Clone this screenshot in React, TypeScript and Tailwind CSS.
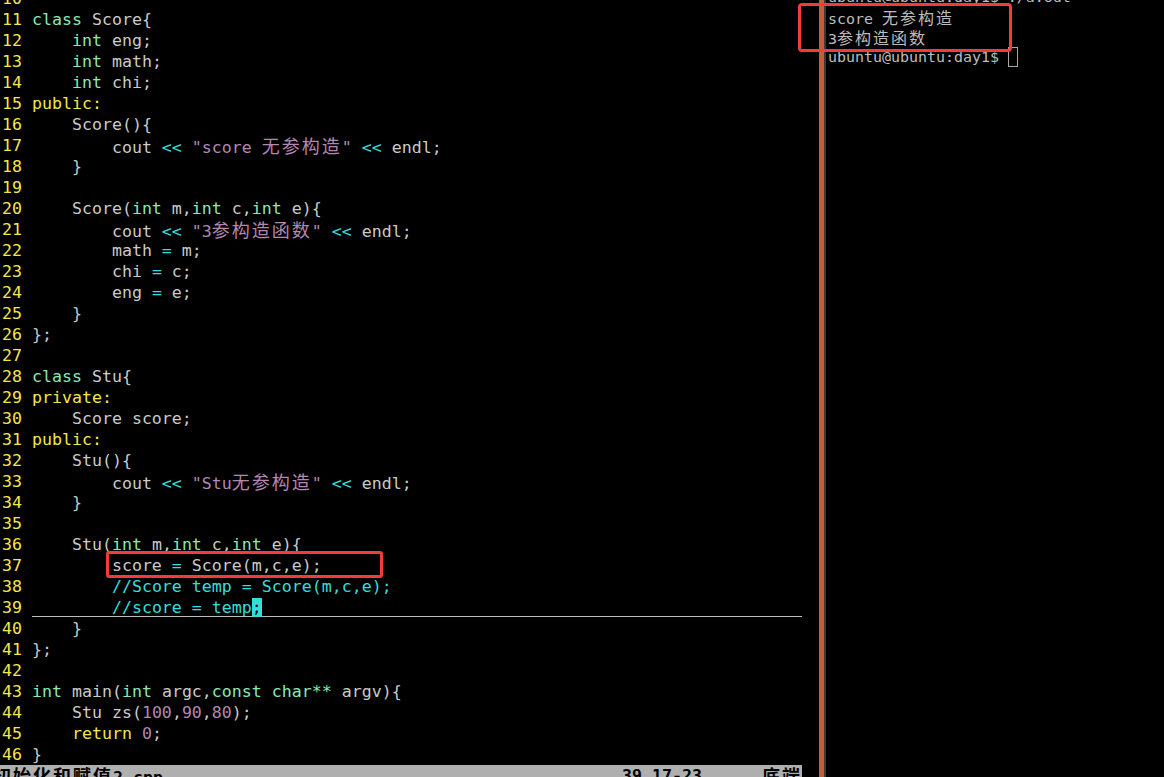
import React from 'react';

// 颜色: n 普通, t 类型, y 关键字, s 字符串/数字, o 运算符/注释
const COLORS: Record<string, string> = {
  n: 'text-[#cacaca]',
  t: 'text-[#8ae8b0]',
  y: 'text-[#f5e64c]',
  s: 'text-[#b487b0]',
  o: 'text-[#34dede]',
  cur: 'bg-[#34dede] text-black',
};

type Tok = [string, string];

const lines: { no: number; toks: Tok[]; cursorLine?: boolean }[] = [
  { no: 10, toks: [] },
  { no: 11, toks: [['class', 't'], [' Score{', 'n']] },
  { no: 12, toks: [['    ', 'n'], ['int', 't'], [' eng;', 'n']] },
  { no: 13, toks: [['    ', 'n'], ['int', 't'], [' math;', 'n']] },
  { no: 14, toks: [['    ', 'n'], ['int', 't'], [' chi;', 'n']] },
  { no: 15, toks: [['public:', 'y']] },
  { no: 16, toks: [['    Score(){', 'n']] },
  { no: 17, toks: [['        cout ', 'n'], ['<<', 'o'], [' ', 'n'], ['"score 无参构造"', 's'], [' ', 'n'], ['<<', 'o'], [' endl;', 'n']] },
  { no: 18, toks: [['    }', 'n']] },
  { no: 19, toks: [] },
  { no: 20, toks: [['    Score(', 'n'], ['int', 't'], [' m,', 'n'], ['int', 't'], [' c,', 'n'], ['int', 't'], [' e){', 'n']] },
  { no: 21, toks: [['        cout ', 'n'], ['<<', 'o'], [' ', 'n'], ['"3参构造函数"', 's'], [' ', 'n'], ['<<', 'o'], [' endl;', 'n']] },
  { no: 22, toks: [['        math ', 'n'], ['=', 'o'], [' m;', 'n']] },
  { no: 23, toks: [['        chi ', 'n'], ['=', 'o'], [' c;', 'n']] },
  { no: 24, toks: [['        eng ', 'n'], ['=', 'o'], [' e;', 'n']] },
  { no: 25, toks: [['    }', 'n']] },
  { no: 26, toks: [['};', 'n']] },
  { no: 27, toks: [] },
  { no: 28, toks: [['class', 't'], [' Stu{', 'n']] },
  { no: 29, toks: [['private:', 'y']] },
  { no: 30, toks: [['    Score score;', 'n']] },
  { no: 31, toks: [['public:', 'y']] },
  { no: 32, toks: [['    Stu(){', 'n']] },
  { no: 33, toks: [['        cout ', 'n'], ['<<', 'o'], [' ', 'n'], ['"Stu无参构造"', 's'], [' ', 'n'], ['<<', 'o'], [' endl;', 'n']] },
  { no: 34, toks: [['    }', 'n']] },
  { no: 35, toks: [] },
  { no: 36, toks: [['    Stu(', 'n'], ['int', 't'], [' m,', 'n'], ['int', 't'], [' c,', 'n'], ['int', 't'], [' e){', 'n']] },
  { no: 37, toks: [['        score ', 'n'], ['=', 'o'], [' Score(m,c,e);', 'n']] },
  { no: 38, toks: [['        ', 'n'], ['//Score temp = Score(m,c,e);', 'o']] },
  { no: 39, toks: [['        ', 'n'], ['//score = temp', 'o'], [';', 'cur']], cursorLine: true },
  { no: 40, toks: [['    }', 'n']] },
  { no: 41, toks: [['};', 'n']] },
  { no: 42, toks: [] },
  { no: 43, toks: [['int', 't'], [' main(', 'n'], ['int', 't'], [' argc,', 'n'], ['const', 't'], [' ', 'n'], ['char**', 't'], [' argv){', 'n']] },
  { no: 44, toks: [['    Stu zs(', 'n'], ['100', 's'], [',', 'n'], ['90', 's'], [',', 'n'], ['80', 's'], [');', 'n']] },
  { no: 45, toks: [['    ', 'n'], ['return', 'y'], [' ', 'n'], ['0', 's'], [';', 'n']] },
  { no: 46, toks: [['}', 'n']] },
];

// 中文字符占两列
const Txt = ({ text, small }: { text: string; small?: boolean }) => {
  const parts = text.split(/([\u3000-\u9fff]+)/);
  return (
    <>
      {parts.map((p, i) =>
        /[\u3000-\u9fff]/.test(p) ? (
          <span
            key={i}
            className={
              small
                ? "font-['Noto_Sans_CJK_SC',sans-serif] text-[16px] tracking-[2px]"
                : "font-['Noto_Sans_CJK_SC',sans-serif] text-[18px] tracking-[2px]"
            }
          >
            {p}
          </span>
        ) : (
          <span key={i}>{p}</span>
        )
      )}
    </>
  );
};

const termLines = [
  'ubuntu@ubuntu:day1$ ./a.out',
  'score 无参构造',
  '3参构造函数',
];

export default function App() {
  return (
    <div className="relative flex w-[1164px] h-[777px] overflow-hidden bg-black font-['DejaVu_Sans_Mono','Noto_Sans_CJK_SC',monospace]">
      {/* vim 编辑区 */}
      <div className="flex flex-col w-[802px] shrink-0 text-[16.6px]">
        <div className="-mt-[12px] pl-[2px]">
          {lines.map((l) => (
            <div key={l.no} className="flex h-[21px] leading-[21px] whitespace-pre">
              <span className="text-[#f5e64c]">{l.no} </span>
              <span className={l.cursorLine ? 'flex-1 h-[20px] border-b border-[#bdbdbd]' : 'flex-1'}>
                {l.toks.map(([t, c], i) => (
                  <span key={i} className={COLORS[c]}>
                    <Txt text={t} />
                  </span>
                ))}
              </span>
            </div>
          ))}
        </div>
        <div className="flex h-[21px] shrink-0 leading-[21px] bg-[#afafaf] text-black font-bold whitespace-pre">
          <div className="w-[622px] overflow-hidden">
            <span className="-ml-[7px] inline-block">
              <Txt text="初始化和赋值2.cpp" />
            </span>
          </div>
          <div className="w-[140px]">39,17-23</div>
          <div>
            <Txt text="底端" />
          </div>
        </div>
      </div>

      {/* 分隔条 */}
      <div className="w-[17px] shrink-0" />
      <div className="w-[5px] shrink-0 bg-[#c45e38]" />
      <div className="w-[2px] shrink-0 bg-[#3a3a3a]" />

      {/* 终端 */}
      <div className="flex-1 pl-[2px] text-[14.95px] text-[#bdbdbd]">
        <div className="-mt-[13px]">
          {termLines.map((t, i) => (
            <div key={i} className="h-[20px] leading-[20px] whitespace-pre">
              <Txt text={t} small />
            </div>
          ))}
          <div className="flex h-[20px] leading-[20px] whitespace-pre">
            <span>ubuntu@ubuntu:day1$ </span>
            <span className="inline-block w-[10px] h-[20px] border border-[#a8a8a8]" />
          </div>
        </div>
      </div>

      {/* 红色标注框 */}
      <div className="absolute left-[798px] top-[3px] w-[214px] h-[49px] border-[3px] border-[#f23c3c] rounded-[4px]" />
      <div className="absolute left-[106px] top-[551px] w-[277px] h-[27px] border-[3px] border-[#f23c3c] rounded-[3px]" />
    </div>
  );
}
